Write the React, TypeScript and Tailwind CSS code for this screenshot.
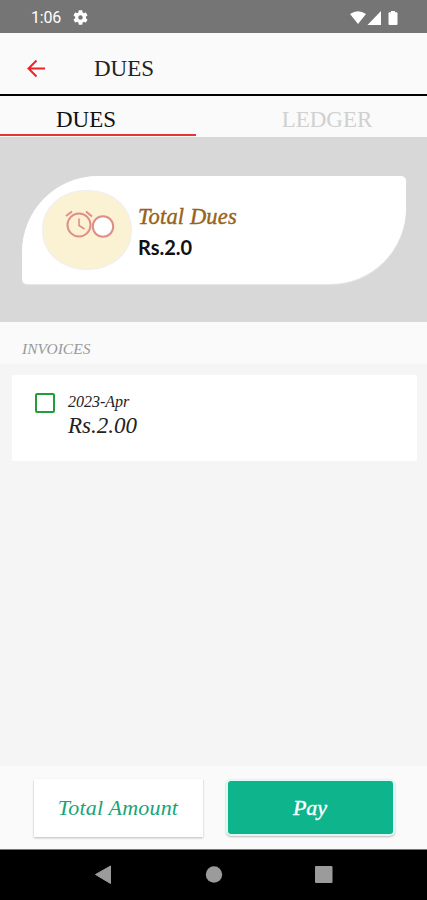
import React, { useState } from "react";

type tabType = "dues" | "ledger";

const invoices = [{ period: "2023-Apr", amount: "Rs.2.00" }];

const StatusBar = () => (
  <div className="flex h-[33px] shrink-0 items-center justify-between bg-[#757575] pl-[31px] pr-[28px] pt-[2px] text-white">
    <div className="flex items-center gap-[12px]">
      <span className="font-['Roboto',sans-serif] text-[16px] leading-none tracking-[-0.2px]">1:06</span>
      <svg width="15" height="15" viewBox="2 2 20 20" fill="currentColor">
        <path d="M19.14 12.94c.04-.3.06-.61.06-.94s-.02-.64-.07-.94l2.03-1.58a.49.49 0 0 0 .12-.61l-1.92-3.32a.49.49 0 0 0-.59-.22l-2.39.96a7 7 0 0 0-1.62-.94l-.36-2.54A.48.48 0 0 0 13.92 2.4h-3.84a.48.48 0 0 0-.48.41l-.36 2.54a7 7 0 0 0-1.62.94l-2.39-.96a.48.48 0 0 0-.59.22L2.74 8.87a.48.48 0 0 0 .12.61l2.03 1.58a6 6 0 0 0 0 1.88l-2.03 1.58a.49.49 0 0 0-.12.61l1.92 3.32c.12.22.37.29.59.22l2.39-.96c.5.38 1.03.7 1.62.94l.36 2.54c.05.24.24.41.48.41h3.84c.24 0 .44-.17.47-.41l.36-2.54a7 7 0 0 0 1.62-.94l2.39.96c.22.08.47 0 .59-.22l1.92-3.32a.48.48 0 0 0-.12-.61zM12 15a3 3 0 1 1 0-6 3 3 0 0 1 0 6z" />
      </svg>
    </div>
    <svg width="49" height="16" viewBox="0 0 49 16" fill="currentColor">
      <path d="M0 4Q8-1.500 16 4L8 14z" />
      <path d="M31 1v14H17.500z" />
      <path d="M39.500 2.200H41V1h4v1.200h1.500q1 0 1 1V14q0 1-1 1h-7q-1 0-1-1V3.200q0-1 1-1z" />
    </svg>
  </div>
);

const NavBar = () => (
  <div className="h-[51px] shrink-0 border-t border-[#777] bg-black">
    <svg width="427" height="50" viewBox="0 0 427 50" fill="#9b9b9b">
      <path d="M95.500 24.500 110.500 16v17.500z" stroke="#9b9b9b" strokeLinejoin="round" />
      <circle cx="214" cy="24.500" r="8.200" />
      <rect x="315" y="16" width="17.500" height="17" rx="1" />
    </svg>
  </div>
);

const DuesIcon = () => (
  <div className="flex h-[78px] w-[88px] items-start rounded-[42px/38px] bg-[#fbf1d3] shadow-[0_0_1px_1px_#eeeef2]">
    <svg
      className="ml-[21px] mt-[18px]"
      width="52"
      height="31"
      viewBox="0 0 52 31"
      fill="none"
      stroke="#df8f86"
      strokeWidth="2"
    >
      <circle cx="15" cy="16" r="11.500" />
      <path d="M15 9.500v7l5.500 3.500" strokeWidth="1.600" />
      <path d="m2 7 6-4.500M22 2.500l6 5" />
      <circle cx="39" cy="17.500" r="10.200" fill="white" />
    </svg>
  </div>
);

const App = () => {
  const [tab, setTab] = useState<tabType>("dues");
  const [checked, setChecked] = useState(false);

  return (
    <div className="flex h-[900px] w-[427px] flex-col overflow-hidden bg-[#f5f5f5] font-['Liberation_Serif',serif]">
      <StatusBar />

      <div className="flex h-[63px] shrink-0 items-center border-b-2 border-black bg-[#fafafa] pl-[27px] pt-[10px]">
        <svg width="18" height="18" viewBox="0 0 18 18" fill="none" stroke="#ee2227" strokeWidth="2">
          <path d="M18 8.500H1.500M9.500.5l-8 8 8 8" />
        </svg>
        <h1 className="ml-[49px] text-[23px] leading-[26px] text-[#222]">DUES</h1>
      </div>

      <div className="flex h-[41px] shrink-0 bg-[#fafafa] text-[23px] leading-[26px]">
        <button
          className={`flex h-[40px] w-[196px] justify-center border-b-2 pr-[24px] pt-[11px] ${
            tab === "dues" ? "border-[#e53535] text-[#111]" : "border-transparent text-[#d0d0d0]"
          }`}
          onClick={() => setTab("dues")}
        >
          DUES
        </button>
        <button
          className={`flex h-[40px] flex-1 justify-center border-b-2 pl-[31px] pt-[11px] ${
            tab === "ledger" ? "border-[#e53535] text-[#111]" : "border-transparent text-[#d0d0d0]"
          }`}
          onClick={() => setTab("ledger")}
        >
          LEDGER
        </button>
      </div>

      <div className="h-[185px] shrink-0 bg-[#d8d8d8] pl-[22px] pr-[21px] pt-[39px]">
        <div className="flex h-[108px] rounded-bl-[5px] rounded-br-[76px] rounded-tl-[76px] rounded-tr-[5px] bg-white pl-[21px] pt-[15px] shadow-[0_1px_1px_#e8e8e8]">
          <DuesIcon />
          <div className="ml-[7px] mt-[11px]">
            <div className="text-[22.5px] italic leading-[30px] tracking-[0.15px] text-[#97631a] [-webkit-text-stroke:0.4px_#97631a]">
              Total Dues
            </div>
            <div className="font-['Lato',sans-serif] text-[20px] font-bold leading-[30px] text-[#111]">
              Rs.2.0
            </div>
          </div>
        </div>
      </div>

      <div className="h-[42px] shrink-0 bg-[#fafafa] pl-[22px] pt-[17px] text-[15.5px] italic leading-[20px] text-[#999]">
        INVOICES
      </div>

      <div className="flex-1 pl-[12px] pr-[10px] pt-[11px]">
        {invoices.map((invoice) => (
          <div key={invoice.period} className="flex h-[86px] rounded-[2px] bg-white pl-[23px] pt-[18px]">
            <button
              aria-label={invoice.period}
              className={`h-[20px] w-[20px] rounded-[2px] border-2 border-[#219d3c] ${
                checked ? "bg-[#219d3c]" : ""
              }`}
              onClick={() => setChecked(!checked)}
            />
            <div className="ml-[13px] italic text-[#222]">
              <div className="text-[16px] leading-[18px]">{invoice.period}</div>
              <div className="text-[23px] leading-[30px]">{invoice.amount}</div>
            </div>
          </div>
        ))}
      </div>

      <div className="flex h-[83px] shrink-0 bg-[#fafafa] pl-[34px] pt-[13px] text-[22px] italic leading-[56px]">
        <button className="h-[58px] w-[169px] bg-white pr-[1px] tracking-[0.2px] text-[#17a478] shadow-[0_1px_2px_#bbb]">
          Total Amount
        </button>
        <button className="ml-[23px] h-[57px] w-[169px] rounded-[5px] border-2 border-[#dffaf2] bg-[#0eb58c] pr-[1px] leading-[53px] text-white shadow-[0_1px_2px_#bbb] [-webkit-text-stroke:0.4px_white]">
          Pay
        </button>
      </div>

      <NavBar />
    </div>
  );
};

export default App;
